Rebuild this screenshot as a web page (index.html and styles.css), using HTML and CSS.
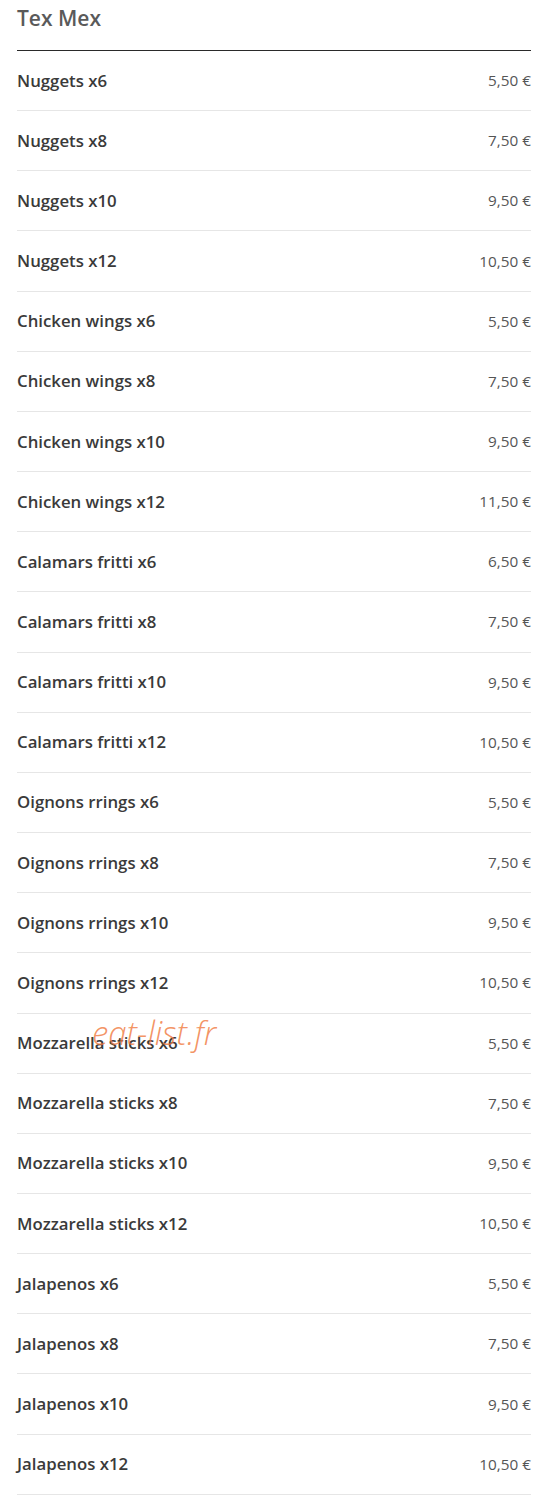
FILE: index.html
```html
<!DOCTYPE html>
<html lang="fr">
<head>
<meta charset="utf-8">
<title>Tex Mex</title>
<link rel="stylesheet" href="styles.css">
</head>
<body>
<div class="menu">
  <h2 class="cat-title">Tex Mex</h2>
  <ul class="items">
    <li class="item"><span class="name">Nuggets x6</span><span class="price">5,50 €</span></li>
    <li class="item"><span class="name">Nuggets x8</span><span class="price">7,50 €</span></li>
    <li class="item"><span class="name">Nuggets x10</span><span class="price">9,50 €</span></li>
    <li class="item"><span class="name">Nuggets x12</span><span class="price">10,50 €</span></li>
    <li class="item"><span class="name">Chicken wings x6</span><span class="price">5,50 €</span></li>
    <li class="item"><span class="name">Chicken wings x8</span><span class="price">7,50 €</span></li>
    <li class="item"><span class="name">Chicken wings x10</span><span class="price">9,50 €</span></li>
    <li class="item"><span class="name">Chicken wings x12</span><span class="price">11,50 €</span></li>
    <li class="item"><span class="name">Calamars fritti x6</span><span class="price">6,50 €</span></li>
    <li class="item"><span class="name">Calamars fritti x8</span><span class="price">7,50 €</span></li>
    <li class="item"><span class="name">Calamars fritti x10</span><span class="price">9,50 €</span></li>
    <li class="item"><span class="name">Calamars fritti x12</span><span class="price">10,50 €</span></li>
    <li class="item"><span class="name">Oignons rrings x6</span><span class="price">5,50 €</span></li>
    <li class="item"><span class="name">Oignons rrings x8</span><span class="price">7,50 €</span></li>
    <li class="item"><span class="name">Oignons rrings x10</span><span class="price">9,50 €</span></li>
    <li class="item"><span class="name">Oignons rrings x12</span><span class="price">10,50 €</span></li>
    <li class="item"><span class="name">Mozzarella sticks x6</span><span class="price">5,50 €</span></li>
    <li class="item"><span class="name">Mozzarella sticks x8</span><span class="price">7,50 €</span></li>
    <li class="item"><span class="name">Mozzarella sticks x10</span><span class="price">9,50 €</span></li>
    <li class="item"><span class="name">Mozzarella sticks x12</span><span class="price">10,50 €</span></li>
    <li class="item"><span class="name">Jalapenos x6</span><span class="price">5,50 €</span></li>
    <li class="item"><span class="name">Jalapenos x8</span><span class="price">7,50 €</span></li>
    <li class="item"><span class="name">Jalapenos x10</span><span class="price">9,50 €</span></li>
    <li class="item"><span class="name">Jalapenos x12</span><span class="price">10,50 €</span></li>
  </ul>
  <div class="watermark">eat-list.fr</div>
</div>
</body>
</html>
```
FILE: styles.css
```css
html, body {
  margin: 0;
  padding: 0;
  background: #fff;
}
body {
  font-family: "Open Sans", "Liberation Sans", sans-serif;
  color: #333;
}
.menu {
  position: relative;
  margin: 0 26px 0 17px;
}
.cat-title {
  margin: 0;
  height: 51px;
  box-sizing: border-box;
  padding-top: 3px;
  font-size: 21px;
  font-weight: 600;
  color: #5a5a5a;
  line-height: 30px;
  border-bottom: 1.5px solid #2a2a2a;
}
.items {
  list-style: none;
  margin: 0;
  padding: 0;
}
.item {
  display: flex;
  justify-content: space-between;
  align-items: center;
  height: 60.17px;
  box-sizing: border-box;
  border-bottom: 1px solid #e6e6e6;
  padding-bottom: 1px;
}
.name {
  font-size: 16.8px;
  font-weight: 600;
  color: #3a3a3a;
}
.price {
  font-size: 15.3px;
  font-weight: 400;
  color: #555;
}
.watermark {
  position: absolute;
  left: 75px;
  top: 1010px;
  font-family: "Open Sans", "Liberation Sans", sans-serif;
  font-style: italic;
  font-weight: 300;
  font-size: 33px;
  color: rgba(240, 120, 60, 0.8);
  pointer-events: none;
}
```
